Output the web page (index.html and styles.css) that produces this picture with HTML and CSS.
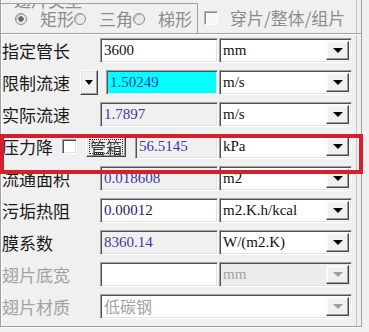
FILE: index.html
```html
<!DOCTYPE html>
<html lang="zh-CN">
<head>
  <meta charset="UTF-8" />
  <meta name="viewport" content="width=device-width, initial-scale=1.0" />
  <title>翅片参数</title>
  <link rel="stylesheet" href="styles.css">
</head>
<body>
  <div class="panel">
    <div class="fin-type">
      <div class="radio-group">
        <span class="legend">翅片类型</span>
        <label class="opt"><span class="radio checked"></span>矩形</label>
        <label class="opt"><span class="radio"></span>三角</label>
        <label class="opt"><span class="radio"></span>梯形</label>
      </div>
      <label class="opt check-opt"><span class="check off"></span>穿片/整体/组片</label>
    </div>

    <div class="rows">
      <div class="row">
        <span class="label">指定管长</span>
        <div class="field">3600</div>
        <div class="combo"><span class="combo-text">mm</span><span class="drop"></span></div>
      </div>

      <div class="row">
        <span class="label w-short">限制流速</span>
        <div class="btn btn-arrow"><span class="arrow"></span></div>
        <div class="field cyan narrow">1.50249</div>
        <div class="combo"><span class="combo-text">m/s</span><span class="drop"></span></div>
      </div>

      <div class="row">
        <span class="label">实际流速</span>
        <div class="field readonly">1.7897</div>
        <div class="combo"><span class="combo-text">m/s</span><span class="drop"></span></div>
      </div>

      <div class="row">
        <span class="label w-tiny">压力降</span>
        <span class="check"></span>
        <div class="btn btn-text"><span class="focus">管箱</span></div>
        <div class="field readonly tiny">56.5145</div>
        <div class="combo"><span class="combo-text">kPa</span><span class="drop"></span></div>
      </div>

      <div class="row">
        <span class="label">流通面积</span>
        <div class="field readonly">0.018608</div>
        <div class="combo"><span class="combo-text">m2</span><span class="drop"></span></div>
      </div>

      <div class="row">
        <span class="label">污垢热阻</span>
        <div class="field navy">0.00012</div>
        <div class="combo"><span class="combo-text">m2.K.h/kcal</span><span class="drop"></span></div>
      </div>

      <div class="row">
        <span class="label">膜系数</span>
        <div class="field readonly">8360.14</div>
        <div class="combo"><span class="combo-text">W/(m2.K)</span><span class="drop"></span></div>
      </div>

      <div class="row disabled">
        <span class="label">翅片底宽</span>
        <div class="field"></div>
        <div class="combo grey"><span class="combo-text">mm</span><span class="drop"></span></div>
      </div>

      <div class="row disabled">
        <span class="label">翅片材质</span>
        <div class="combo wide"><span class="combo-text cjk">低碳钢</span><span class="drop"></span></div>
      </div>
    </div>

    <div class="highlight"></div>
  </div>
</body>
</html>
```

FILE: styles.css
```css
:root {
  --bg: #f0f0f0;
  --dark: #505050;
  --mid: #a0a0a0;
  --light: #e3e3e3;
  --blue: #3a3aa6;
  --grey-text: #a2a2a2;
  --red: #d4202a;
}

* {
  box-sizing: border-box;
  margin: 0;
  padding: 0;
}

html, body {
  width: 369px;
  height: 332px;
  overflow: hidden;
}

body {
  background: var(--bg);
  font-family: 'Noto Sans CJK SC', 'Noto Sans', sans-serif;
  color: #1a1a1a;
}

.panel {
  position: relative;
  width: 362px;
  height: 327px;
  border-left: 1px solid var(--mid);
  border-right: 1px solid var(--mid);
  border-bottom: 1px solid var(--mid);
  box-shadow: inset 1px 0 0 #fff, inset -4px 0 0 var(--bg), inset -5px 0 0 #c4c4c4, 0 1px 0 #fff;
}

/* fin type group */
.fin-type {
  display: flex;
  height: 34px;
  border-bottom: 1px solid var(--mid);
  box-shadow: 0 1px 0 #fff;
}

.radio-group {
  position: relative;
  display: flex;
  align-items: center;
  width: 197px;
  margin-top: 3px;
  padding-left: 14px;
  border-top: 1px solid var(--mid);
  border-right: 1px solid var(--mid);
  overflow: hidden;
}

.legend {
  position: absolute;
  left: 12px;
  top: -11px;
  padding: 0 1px;
  background: var(--bg);
  font-size: 17px;
  color: #8c8c8c;
  line-height: 14px;
}

.opt {
  display: flex;
  align-items: center;
  font-size: 17px;
  color: #8c8c8c;
  white-space: nowrap;
}

.radio {
  width: 12px;
  height: 12px;
  margin-right: 13px;
  border-radius: 50%;
  border: 1px solid #8c8c8c;
  background: #eaeaea;
  box-shadow: inset 1px 1px 0 #c0c0c0;
  flex: none;
}

.radio.checked {
  background: radial-gradient(circle, #6a6a6a 0 2.5px, #eaeaea 3px);
}

.check-opt {
  margin-left: 6px;
  margin-top: 2px;
}

.check {
  display: block;
  width: 15px;
  height: 15px;
  flex: none;
  background: #fff;
  border: 1px solid;
  border-color: var(--mid) #fff #fff var(--mid);
  box-shadow: inset 1px 1px 0 var(--dark), inset -1px -1px 0 var(--light);
}

.check.off {
  width: 14px;
  height: 14px;
  margin-right: 12px;
  background: #f7f7f7;
  border-color: #b4b4b4 #fff #fff #b4b4b4;
  box-shadow: inset 1px 1px 0 #8c8c8c;
}

/* form rows */
.rows {
  display: flex;
  flex-direction: column;
  gap: 7px;
  margin-top: 4px;
  padding-left: 1px;
}

.row {
  display: flex;
  align-items: center;
  height: 25px;
}

.label {
  width: 98px;
  flex: none;
  font-size: 17px;
  line-height: 25px;
  white-space: nowrap;
}

.label.w-short { width: 78px; }
.label.w-tiny { width: 60px; }

.field {
  width: 118px;
  height: 25px;
  padding-left: 3px;
  flex: none;
  background: #fff;
  border: 1px solid;
  border-color: var(--mid) #fff #fff var(--mid);
  box-shadow: inset 1px 1px 0 var(--dark), inset -1px -1px 0 var(--light);
  font-family: 'Liberation Serif', serif;
  font-size: 15px;
  line-height: 23px;
  color: #111;
}

.field.readonly {
  background: var(--bg);
  color: var(--blue);
}

.field.navy { color: #22226a; }

.field.cyan {
  background: #00ffff;
  color: #2a3ac0;
}

.field.narrow {
  width: 112px;
  margin-left: 8px;
}

.field.tiny {
  width: 83px;
  margin-left: 9px;
}

.btn {
  flex: none;
  display: flex;
  align-items: center;
  justify-content: center;
  background: var(--bg);
  border: 1px solid;
  border-color: #fff #404040 #404040 #fff;
  box-shadow: inset -1px -1px 0 var(--mid), inset 1px 1px 0 var(--light);
}

.btn-arrow {
  width: 18px;
  height: 25px;
}

.btn-text {
  width: 40px;
  height: 21px;
  margin-left: 9px;
  padding: 2px;
}

.focus {
  display: block;
  width: 100%;
  height: 100%;
  border: 1px dotted #222;
  font-size: 16px;
  line-height: 14px;
  text-align: center;
  white-space: nowrap;
  color: #333;
}

.arrow {
  display: block;
  width: 0;
  height: 0;
  border-left: 4px solid transparent;
  border-right: 4px solid transparent;
  border-top: 5px solid #000;
}

.combo {
  display: flex;
  align-items: stretch;
  width: 133px;
  height: 25px;
  margin-left: 1px;
  flex: none;
  padding: 2px;
  background: #fff;
  border: 1px solid;
  border-color: var(--mid) #fff #fff var(--mid);
  box-shadow: inset 1px 1px 0 var(--dark), inset -1px -1px 0 var(--light);
}

.combo.wide {
  width: 252px;
  margin-left: 0;
}

.combo.grey { background: #ececec; }

.combo-text {
  flex: 1;
  padding-left: 1px;
  font-family: 'Liberation Serif', serif;
  font-size: 15px;
  line-height: 19px;
  color: #111;
  white-space: nowrap;
}

.combo-text.cjk {
  font-family: 'Noto Sans CJK SC', sans-serif;
  font-size: 16px;
  line-height: 19px;
}

.drop {
  width: 23px;
  flex: none;
  display: flex;
  align-items: center;
  justify-content: center;
  background: var(--bg);
  border: 1px solid;
  border-color: #f4f4f4 #404040 #404040 #f4f4f4;
  box-shadow: inset -1px -1px 0 var(--mid), inset 1px 1px 0 #fff;
}

.drop::after {
  content: '';
  width: 0;
  height: 0;
  border-left: 5px solid transparent;
  border-right: 5px solid transparent;
  border-top: 5px solid #000;
}

.disabled .label,
.disabled .combo-text {
  color: var(--grey-text);
}

.disabled .drop::after {
  border-top-color: #a0a0a0;
}

/* annotation box */
.highlight {
  position: absolute;
  left: -1px;
  top: 134px;
  width: 363px;
  height: 40px;
  border: 4px solid var(--red);
}
```
